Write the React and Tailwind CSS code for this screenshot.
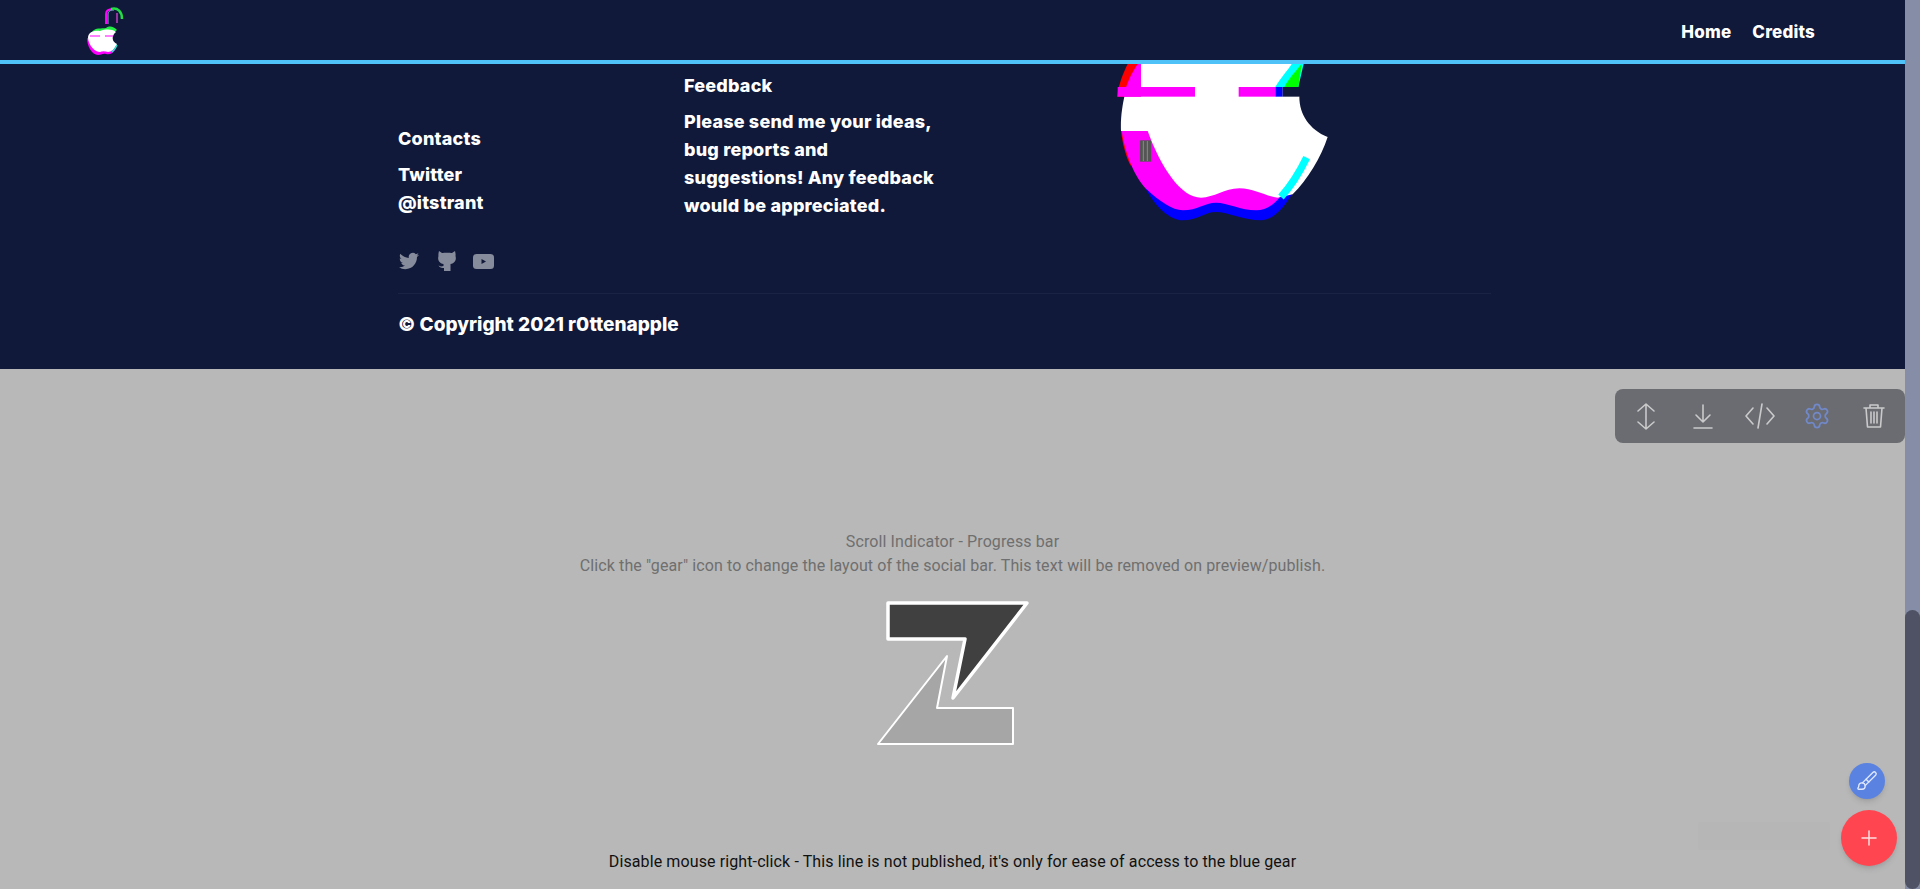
import React from 'react'
import { Settings, Brush, Plus } from 'lucide-react'

const BG = '#10193a'

// coordinates are 3x page pixels, taken from the reference crop
const BigApple = () => (
  <svg viewBox="0 39 900 531" className="w-[300px] h-[177px] shrink-0">
    <path fill="#0000ff" d="M185,395 C220,470 270,508 305,508 C350,508 370,483 405,483 C440,483 490,508 540,508 C575,508 610,470 635,425 L600,380 Z" />
    <path fill="#ff0000" d="M120,240 C125,280 135,320 150,345 L160,300 L150,240 Z" />
    <path fill="#ff00ff" d="M122,240 C135,320 165,385 200,418 C235,450 275,478 305,478 C350,478 370,455 405,455 C440,455 480,478 525,478 C550,478 575,465 595,440 L600,400 L220,240 Z" />
    <path fill="#ff0000" d="M108,137 C113,100 125,70 140,39 H200 V137 Z" />
    <path fill="#ff00ff" d="M128,137 C135,100 150,70 170,39 H200 V137 Z" />
    <path fill="#ffffff" d="M180,39 H640 V108 L655,137 C655,190 685,235 740,258 C720,320 680,385 635,430 L590,440 C550,435 520,412 475,412 C430,412 400,440 360,440 C300,440 240,350 200,240 H120 C118,200 125,160 130,137 H180 Z" />
    <path fill="#00ffff" d="M583,108 C600,80 620,58 632,39 H668 L652,108 Z" />
    <path fill="#00ff00" d="M610,108 C625,80 645,60 662,39 L652,108 Z" />
    <rect x="110" y="108" width="232" height="29" fill="#ff00ff" />
    <rect x="473" y="108" width="110" height="29" fill="#ff00ff" />
    <rect x="583" y="108" width="22" height="29" fill="#0000ff" />
    <rect x="605" y="108" width="50" height="29" fill={BG} />
    <path d="M677,320 C655,365 630,405 600,438" fill="none" stroke="#00ffff" strokeWidth="22" />
    <rect x="177" y="268" width="33" height="64" fill="#555555" />
    <path d="M187,270 V330 M199,270 V330" stroke="#8a8a8a" strokeWidth="3" />
  </svg>
)

// offset by (80,0) from page pixels
const LogoSmall = () => (
  <svg viewBox="0 0 50 60" className="w-[50px] h-[60px] shrink-0">
    <path d="M26 24 V14 C26 10 29 9 33 9" fill="none" stroke="#ff00ff" strokeWidth="2" />
    <path d="M28 24 V14 C28 11 31 10 34 10" fill="none" stroke="#7fb0d0" strokeWidth="1" />
    <path d="M31 9 C38 7 42 12 42 19" fill="none" stroke="#22dd44" strokeWidth="2.500" />
    <path d="M37 13 V23" fill="none" stroke="#c040c0" strokeWidth="1.500" />
    <path d="M12 32 C15 27 22 29 26 28 C30 25 34 27 37 30 L33 33 Z" fill="#22ee44" />
    <path d="M7 38 C7 46 12 55 18 55 C21 55 23 53 26 54 C30 55 33 53 35 50 L20 44 Z" fill="#ff00ff" />
    <path d="M8 38 C8 32 14 30 20 31 C26 29 32 29 36 32 C31 36 32 42 37 44 C35 49 31 52 28 52 C25 51 22 51 20 52 C15 52 9 46 8 38 Z" fill="#ffffff" />
    <path d="M10 36 H20 M25 36 H33" stroke="#ff00ff" strokeWidth="1" />
    <path d="M37 45 C36 48 34 50 32 52" fill="none" stroke="#30e0d0" strokeWidth="1.500" />
  </svg>
)

const Twitter = () => (
  <svg viewBox="0 0 24 24" className="w-[20px] h-[20px] fill-[#878c9c]">
    <path d="M23.95 4.57a10 10 0 0 1-2.82.77 4.96 4.96 0 0 0 2.16-2.72c-.95.55-2 .95-3.12 1.18a4.92 4.92 0 0 0-8.38 4.48C7.69 8.1 4.07 6.13 1.64 3.16a4.82 4.82 0 0 0-.67 2.48c0 1.71.87 3.21 2.19 4.1a4.9 4.9 0 0 1-2.23-.62v.06a4.92 4.92 0 0 0 3.95 4.83 5 5 0 0 1-2.21.08 4.94 4.94 0 0 0 4.6 3.42A9.87 9.87 0 0 1 0 19.54a14 14 0 0 0 7.56 2.21c9.05 0 14-7.5 14-13.98 0-.21 0-.42-.02-.63a9.94 9.94 0 0 0 2.46-2.55z" />
  </svg>
)

const Github = () => (
  <svg viewBox="0 0 18 20" className="w-[18px] h-[20px] fill-[#878c9c]">
    <path d="M1 0 L4 2 C6 1.500 12 1.500 14 2 L17 0 C17.500 2 17.800 3.500 17.500 5 C18.500 8 17.500 12 12.500 13 V20 H6 V17 C3 17.500 1.500 16 0.500 14.500 L3 15.500 L5.500 15 V13 C0.500 12 -0.500 8 0.500 5 C0.200 3.500 0.500 2 1 0 Z" />
  </svg>
)

const Youtube = () => (
  <svg viewBox="0 0 21 15" className="w-[21px] h-[15px]">
    <rect width="21" height="15" rx="3.500" fill="#878c9c" />
    <path d="M8.500 5 L13 7.500 L8.500 10 Z" fill={BG} />
  </svg>
)

const ToolIcon = ({ children }) => (
  <svg viewBox="0 0 30 30" className="w-[30px] h-[30px]" fill="none" stroke="#cacaca" strokeWidth="1.600" strokeLinecap="round" strokeLinejoin="round">
    {children}
  </svg>
)

const ToolSlot = ({ children }) => (
  <div className="w-[57px] flex items-center justify-center">{children}</div>
)

const ZLogo = () => (
  <svg viewBox="0 0 155 148" className="w-[155px] h-[148px] shrink-0">
    <path d="M13 3 H152 L78 98 L90 39 H13 Z" fill="#404040" stroke="#ffffff" strokeWidth="3.500" strokeLinejoin="round" />
    <path d="M3 144 L72 56 L62 108 H138 V144 Z" fill="#a6a6a6" stroke="#ffffff" strokeWidth="2" strokeLinejoin="round" />
  </svg>
)

export default function App() {
  return (
    <div className="h-[889px] flex overflow-hidden font-['Inter',sans-serif] bg-[#b8b8b8]">
      <div className="flex-1 min-w-0 relative flex flex-col">
        {/* Navbar */}
        <header className="h-[64px] shrink-0 bg-[#10193a] border-b-4 border-[#4fc3f7] flex items-center justify-between pl-[80px] pr-[90px]">
          <LogoSmall />
          <nav className="flex gap-[21px] pt-[5px] text-white font-extrabold text-[17px] tracking-[0.2px]">
            <span>Home</span>
            <span>Credits</span>
          </nav>
        </header>

        {/* Footer */}
        <footer className="h-[305px] shrink-0 bg-[#10193a] text-white font-extrabold text-[18px] leading-[28px] tracking-[0.2px] pl-[398px]">
          <div className="w-[1093px] h-[229px] flex">
            <div className="w-[286px] pt-[61px]">
              <h4 className="mb-2">Contacts</h4>
              <p className="w-[120px]">Twitter @itstrant</p>
              <div className="flex items-center mt-[34px] pl-[1px]">
                <Twitter />
                <div className="ml-[19px]"><Github /></div>
                <div className="ml-[17px]"><Youtube /></div>
              </div>
            </div>
            <div className="w-[397px] pt-[8px]">
              <h4 className="mb-2">Feedback</h4>
              <p className="w-[262px]">
                Please send me your ideas, bug reports and suggestions! Any feedback would be appreciated.
              </p>
            </div>
            <BigApple />
          </div>
          <div className="w-[1093px] border-t border-[#1a2344] pt-[17px] text-[19px] tracking-normal">
            © Copyright 2021 r0ttenapple
          </div>
        </footer>

        {/* Page body */}
        <main className="flex-1 flex flex-col items-center font-['Roboto',sans-serif] text-[16px] leading-[24px] tracking-[0.11px] text-[#6f6f6f] pt-[161px]">
          <p>Scroll Indicator - Progress bar</p>
          <p>Click the "gear" icon to change the layout of the social bar. This text will be removed on preview/publish.</p>
          <div className="mt-[22px]"><ZLogo /></div>
          <p className="mt-[102px] text-[#111111]">Disable mouse right-click - This line is not published, it's only for ease of access to the blue gear</p>
        </main>

        {/* Editor toolbar */}
        <div className="absolute right-0 top-[389px] w-[290px] h-[54px] rounded-[8px] bg-[#6a6c72] flex items-center px-[2px]">
          <ToolSlot><ToolIcon><path d="M15 3V28M7 10l8-7 8 7M7 21l8 7 8-7" /></ToolIcon></ToolSlot>
          <ToolSlot><ToolIcon><path d="M15 4V21M8 14l7 7 7-7M6 27H24" /></ToolIcon></ToolSlot>
          <ToolSlot><ToolIcon><path d="M8 7L1 15l7 8M22 7l7 8-7 8M17 3L13 27" /></ToolIcon></ToolSlot>
          <ToolSlot><Settings className="w-[28px] h-[28px] text-[#7188c9]" strokeWidth={1.500} /></ToolSlot>
          <ToolSlot><ToolIcon><path d="M5 7H25M11 6V4H19V6M7 7l1.500 19H21.500L23 7M12 11V22M15 11V22M18 11V22" /></ToolIcon></ToolSlot>
        </div>

        {/* FABs */}
        <div className="absolute right-[75px] bottom-[39px] w-[132px] h-[28px] bg-[#b6b6b6] rounded-[2px]" />
        <button className="absolute right-[8px] bottom-[23px] w-[56px] h-[56px] rounded-full bg-[#ff4650] shadow-md flex items-center justify-center">
          <Plus className="w-[24px] h-[24px] text-[#ffe0e0]" strokeWidth={1.500} />
        </button>
        <button className="absolute right-[20px] bottom-[90px] w-[36px] h-[36px] rounded-full bg-[#5a82e0] shadow-md flex items-center justify-center">
          <Brush className="w-[22px] h-[22px] text-[#dfe8ff]" strokeWidth={1.500} />
        </button>
      </div>

      {/* Scrollbar */}
      <div className="w-[15px] shrink-0 bg-[#868da6] flex flex-col justify-end">
        <div className="h-[279px] rounded-full bg-[#4e5264]" />
      </div>
    </div>
  )
}
